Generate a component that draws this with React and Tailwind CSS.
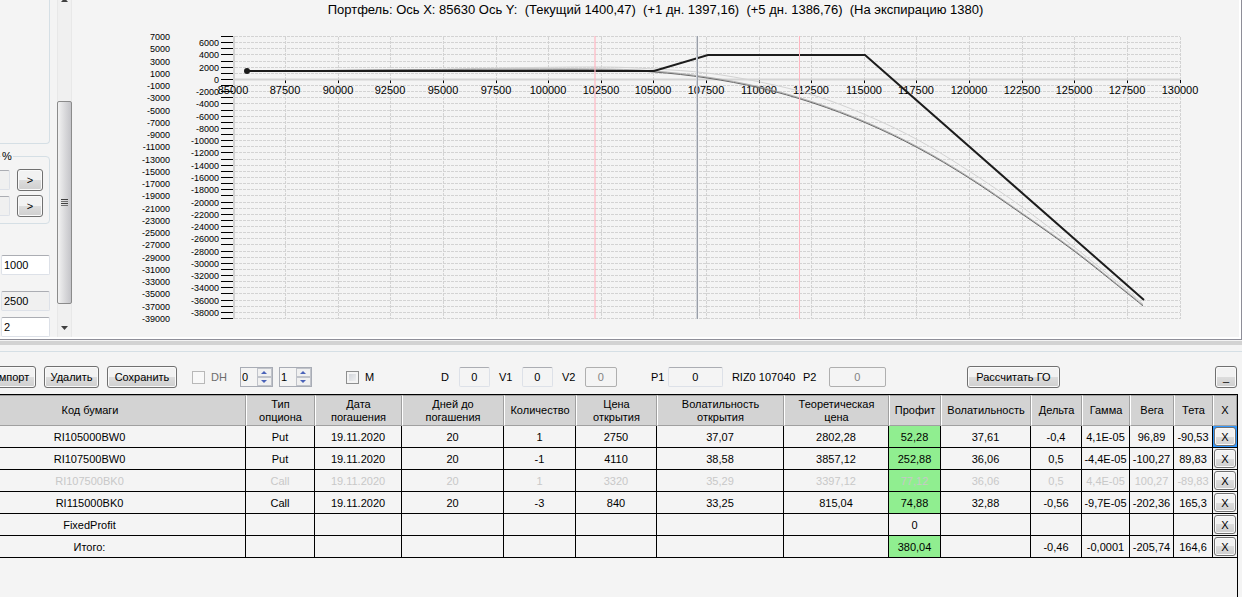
import React, { useState } from 'react';

const X_MIN = 85000;
const Y_MAX = 7000;
const PLOT = { left: 233, right: 1180, top: 37, bottom: 319 };

const toX = (v) => Math.floor(PLOT.left + ((v - X_MIN) * (PLOT.right - PLOT.left)) / 45000);
const toY = (v) => Math.round(PLOT.top + ((Y_MAX - v) * (PLOT.bottom - PLOT.top)) / 46000);

const xTicks = Array.from({ length: 19 }, (_, i) => X_MIN + i * 2500);
const yTicks = Array.from({ length: 47 }, (_, i) => Y_MAX - i * 1000);

const expiration = [[247, 71], [654, 71], [708, 55], [865, 55], [1144, 300]];
const current = [
    [247, 71], [400, 70], [500, 70], [600, 70], [654, 72], [707, 78], [760, 88], [813, 103],
    [866, 123], [918, 148], [969, 178], [1022, 214], [1074, 251], [1127, 293], [1143, 306],
];
const plusOne = [
    [247, 71], [400, 70], [500, 69], [600, 69], [654, 71], [707, 77], [760, 87], [813, 102],
    [866, 122], [918, 147], [969, 177], [1022, 213], [1074, 250], [1127, 292], [1143, 305],
];
const plusFive = [
    [247, 71], [400, 70], [500, 68], [600, 67], [654, 69], [707, 73], [760, 82], [813, 95],
    [866, 115], [918, 140], [969, 171], [1022, 207], [1074, 247], [1127, 290], [1143, 304],
];

// Catmull-Rom through the points, written out as cubic beziers
const smooth = (pts) => {
    let d = `M${pts[0][0]} ${pts[0][1]}`;
    for (let i = 0; i < pts.length - 1; i++) {
        const p0 = pts[i - 1] || pts[i];
        const p1 = pts[i];
        const p2 = pts[i + 1];
        const p3 = pts[i + 2] || p2;
        d += ` C${p1[0] + (p2[0] - p0[0]) / 6} ${p1[1] + (p2[1] - p0[1]) / 6} ${p2[0] - (p3[0] - p1[0]) / 6} ${p2[1] - (p3[1] - p1[1]) / 6} ${p2[0]} ${p2[1]}`;
    }
    return d;
};

const columns = [
    { label: 'Код бумаги' },
    { label: 'Тип опциона', width: 69 },
    { label: 'Дата погашения', width: 87 },
    { label: 'Дней до погашения', width: 102 },
    { label: 'Количество', width: 72 },
    { label: 'Цена открытия', width: 81 },
    { label: 'Волатильность открытия', width: 127 },
    { label: 'Теоретическая цена', width: 105 },
    { label: 'Профит', width: 52 },
    { label: 'Волатильность', width: 90 },
    { label: 'Дельта', width: 51 },
    { label: 'Гамма', width: 48 },
    { label: 'Вега', width: 44 },
    { label: 'Тета', width: 39 },
    { label: 'X', width: 24 },
];

const rows = [
    { cells: ['RI105000BW0', 'Put', '19.11.2020', '20', '1', '2750', '37,07', '2802,28', '52,28', '37,61', '-0,4', '4,1E-05', '96,89', '-90,53'], green: true, active: true },
    { cells: ['RI107500BW0', 'Put', '19.11.2020', '20', '-1', '4110', '38,58', '3857,12', '252,88', '36,06', '0,5', '-4,4E-05', '-100,27', '89,83'], green: true },
    { cells: ['RI107500BK0', 'Call', '19.11.2020', '20', '1', '3320', '35,29', '3397,12', '77,12', '36,06', '0,5', '4,4E-05', '100,27', '-89,83'], green: true, muted: true },
    { cells: ['RI115000BK0', 'Call', '19.11.2020', '20', '-3', '840', '33,25', '815,04', '74,88', '32,88', '-0,56', '-9,7E-05', '-202,36', '165,3'], green: true },
    { cells: ['FixedProfit', '', '', '', '', '', '', '', '0', '', '', '', '', ''] },
    { cells: ['Итого:', '', '', '', '', '', '', '', '380,04', '', '-0,46', '-0,0001', '-205,74', '164,6'], green: true },
];

const Button = ({ className = '', ...props }) => (
    <button
        type="button"
        className={`shrink-0 rounded-[3px] border border-[#707070] bg-linear-to-b from-[#f2f2f2] from-50% via-[#dddddd] via-50% to-[#cfcfcf] text-center whitespace-nowrap inset-shadow-[0_0_0_1px_#fafafa] ${className}`}
        {...props}
    />
);

const Field = ({ className = '', ...props }) => (
    <input
        type="text"
        className={`h-5 min-w-0 shrink-0 rounded-[2px] border ${className}`}
        {...props}
    />
);

const Spinner = ({ label, value, setValue, className = '' }) => (
    <div className={`flex h-5 w-[33px] shrink-0 border border-[#a8acb5] ${className}`}>
        <input
            type="text"
            aria-label={label}
            className="w-4 min-w-0 pl-px"
            value={value}
            onChange={e => setValue(Number(e.target.value) || 0)}
        />
        <div className="flex flex-1 flex-col">
            <button
                type="button"
                aria-label="Больше"
                onClick={() => setValue(value + 1)}
                className="flex flex-1 items-center justify-center border border-[#c0c3ca] bg-[#f0f0f0]"
            >
                <svg viewBox="0 0 6 3" className="h-[3px] w-[6px]"><path d="M0 3L3 0L6 3Z" fill="#4a62b8" /></svg>
            </button>
            <button
                type="button"
                aria-label="Меньше"
                onClick={() => setValue(value - 1)}
                className="flex flex-1 items-center justify-center border border-[#c0c3ca] bg-[#f0f0f0]"
            >
                <svg viewBox="0 0 6 3" className="h-[3px] w-[6px]"><path d="M0 0L3 3L6 0Z" fill="#4a62b8" /></svg>
            </button>
        </div>
    </div>
);

const Sidebar = () => (
    <div className="flex w-[72px] shrink-0 overflow-hidden">
        <div className="w-[57px] shrink-0 overflow-hidden">
            <div className="-ml-2 h-36 w-[58px] rounded-b-[4px] border border-t-0 border-[#d5dfe5]" />
            <fieldset className="mt-1 -ml-2 h-[76px] w-[58px] rounded-[4px] border border-[#d5dfe5] pt-[5px]">
                <legend className="ml-2 px-px leading-4">%</legend>
                <div className="flex flex-col gap-1">
                    <div className="flex h-[22px] items-center gap-[7px]">
                        <Field aria-label="Первый процент" className="w-[17px] border-[#dde1e8] border-t-[#abadb3] bg-[#f0f0f0]" readOnly />
                        <Button className="h-[22px] w-[26px]">&gt;</Button>
                    </div>
                    <div className="flex h-[22px] items-center gap-[7px]">
                        <Field aria-label="Второй процент" className="w-[17px] border-[#dde1e8] border-t-[#abadb3] bg-[#f0f0f0]" readOnly />
                        <Button className="h-[22px] w-[26px]">&gt;</Button>
                    </div>
                </div>
            </fieldset>
            <div className="ml-px flex w-[49px] flex-col pt-[31px]">
                <Field aria-label="Шаг" defaultValue="1000" className="border-[#dde1e8] border-t-[#abadb3] bg-white pl-0.5" />
                <Field aria-label="Шаг сетки" defaultValue="2500" readOnly className="mt-4 border-[#dde1e8] border-t-[#abadb3] bg-[#f0f0f0] pl-0.5" />
                <Field aria-label="Знаков" defaultValue="2" className="mt-1.5 border-[#dde1e8] border-t-[#abadb3] bg-white pl-0.5" />
            </div>
        </div>
        {/* Scrollbar */}
        <div className="flex w-[15px] flex-col items-center border-x border-[#e8e8e8] bg-[#f0f0f0]">
            <svg viewBox="0 0 7 4" className="-mt-0.5 h-1 w-[7px] shrink-0"><path d="M0 4L3.5 0L7 4Z" fill="#404040" /></svg>
            <div className="mt-[99px] flex h-[203px] w-[15px] shrink-0 flex-col items-center justify-center gap-px rounded-[2px] border border-[#8b8b8b] bg-linear-to-r from-[#f2f2f2] to-[#c4c4c8]">
                <div className="h-px w-[7px] bg-[#404040]" />
                <div className="h-px w-[7px] bg-[#707070]" />
                <div className="h-px w-[7px] bg-[#404040]" />
                <div className="h-px w-[7px] bg-[#707070]" />
            </div>
            <svg viewBox="0 0 7 4" className="mt-[22px] h-1 w-[7px] shrink-0"><path d="M0 0L3.5 4L7 0Z" fill="#404040" /></svg>
        </div>
    </div>
);

const Chart = () => (
    <svg viewBox="72 20 1167 317" className="block w-full" role="img" aria-label="Портфель">
        {yTicks.map(v => (
            <g key={v}>
                <path d={`M${PLOT.left + 2} ${toY(v) - 0.5}H${PLOT.right}`} stroke="#d3d3d3" strokeDasharray="3 1" />
                <path d={`M221 ${toY(v) - 0.5}H233`} stroke="#000" />
                <text x={v % 2000 ? 170 : 219} y={toY(v) + 3} textAnchor="end" fontSize="9">{v}</text>
            </g>
        ))}
        {xTicks.map(v => (
            <g key={v}>
                <path d={`M${toX(v) + 0.5} ${PLOT.top}V${PLOT.bottom}`} stroke="#d3d3d3" strokeDasharray="3 1" />
                <path d={`M${toX(v) + 0.5} 80V83`} stroke="#000" />
            </g>
        ))}
        <path d="M234 36V319M233 79.5H1180" stroke="#d3d3d3" strokeWidth="2" fill="none" />
        {xTicks.map(v => (
            <text key={v} x={toX(v)} y="94" textAnchor="middle" fontSize="11">{v}</text>
        ))}
        <path d={smooth(plusFive)} stroke="#d3d3d3" fill="none" />
        <path d={smooth(plusOne)} stroke="#b0b0b0" fill="none" />
        <path d={smooth(current)} stroke="#696969" fill="none" />
        <path d={`M${expiration.join('L')}`} stroke="#1c1c1c" strokeWidth="2" fill="none" />
        <circle cx="247" cy="71" r="3" fill="#1c1c1c" />
        <path d="M595 36V319" stroke="#ffb6c1" strokeOpacity="0.6" strokeWidth="2" />
        <path d="M799.5 36V319" stroke="#ffb6c1" />
        <path d="M696.5 36V319" stroke="#d0d3d8" />
        <path d="M697.5 36V319" stroke="#9a9fa9" />
    </svg>
);

const Toolbar = () => {
    const [first, setFirst] = useState(0);
    const [second, setSecond] = useState(1);

    return (
        <div className="flex h-[42px] items-center overflow-hidden pt-2 pr-[5px]">
            <Button className="-ml-4 h-[22px] w-[52px]">Импорт</Button>
            <Button className="ml-2 h-[22px] w-[55px]">Удалить</Button>
            <Button className="ml-2 h-[22px] w-[70px]">Сохранить</Button>
            <label className="ml-[15px] flex shrink-0 items-center gap-1.5 text-[#6d6d6d]">
                <input type="checkbox" disabled className="size-[13px] appearance-none border border-[#b8b8b8] bg-[#f8f8f8]" />
                DH
            </label>
            <Spinner label="Первое значение" value={first} setValue={setFirst} className="ml-[13px]" />
            <Spinner label="Второе значение" value={second} setValue={setSecond} className="ml-1.5" />
            <label className="ml-[34px] flex w-[95px] shrink-0 items-center gap-1.5">
                <input type="checkbox" className="size-[13px] appearance-none border border-[#8e8f8f] bg-linear-to-br from-[#cbcfd5] to-[#f6f6f6] inset-shadow-[0_0_0_2px_#f4f4f4]" />
                M
            </label>
            <label className="flex shrink-0 items-center">
                <span className="w-[18px]">D</span>
                <Field defaultValue="0" className="w-[31px] border-[#dde1e8] border-t-[#abadb3] text-center" />
            </label>
            <label className="ml-[9px] flex shrink-0 items-center">
                <span className="w-[23px]">V1</span>
                <Field defaultValue="0" className="w-[31px] border-[#dde1e8] border-t-[#abadb3] text-center" />
            </label>
            <label className="ml-[9px] flex shrink-0 items-center">
                <span className="w-[23px]">V2</span>
                <Field defaultValue="0" disabled className="w-8 border-[#afafaf] text-center text-[#838383]" />
            </label>
            <label className="ml-[34px] flex shrink-0 items-center">
                <span className="w-[17px]">P1</span>
                <Field defaultValue="0" className="w-[55px] border-[#dde1e8] border-t-[#abadb3] text-center" />
            </label>
            <span className="ml-[9px] w-[71px] shrink-0 whitespace-nowrap">RIZ0 107040</span>
            <label className="flex shrink-0 items-center">
                <span className="w-[26px]">P2</span>
                <Field defaultValue="0" disabled className="w-[57px] border-[#afafaf] text-center text-[#838383]" />
            </label>
            <Button className="ml-[81px] h-[22px] w-[93px]">Рассчитать ГО</Button>
            <Button className="ml-auto h-[22px] w-[22px]">_</Button>
        </div>
    );
};

const Positions = () => (
    <div className="mr-1 flex-1 overflow-hidden border-t border-r border-black">
        <div className="-ml-[66px]">
            <table className="w-full table-fixed border-separate border-spacing-0 text-center">
                <colgroup>
                    {columns.map((c, i) => <col key={i} style={{ width: c.width }} />)}
                </colgroup>
                <thead>
                    <tr className="h-[31px] bg-[#d3d3d3]">
                        {columns.map((c, i) => (
                            <th
                                key={i}
                                scope="col"
                                className="border border-t-[#a0a0a0] border-r-[#a0a0a0] border-b-[#a0a0a0] border-l-white p-0 leading-[13px] font-normal"
                            >
                                {/* two-word headings take two lines, the code column stays on one */}
                                {i === 0 ? c.label : c.label.replace(/ (?=\S+$)/, '\n').split('\n').map(line => (
                                    <span key={line} className="block whitespace-nowrap">{line}</span>
                                ))}
                            </th>
                        ))}
                    </tr>
                </thead>
                <tbody>
                    {rows.map(row => (
                        <tr key={row.cells[0]} className={row.muted ? 'h-[22px] text-[#c8c8c8]' : 'h-[22px]'}>
                            {row.cells.map((cell, i) => (
                                <td
                                    key={i}
                                    className={`border-r border-b border-black p-0 leading-4 whitespace-nowrap ${i === 8 && row.green ? 'bg-[#90ee90]' : ''}`}
                                >
                                    {cell}
                                </td>
                            ))}
                            <td className={`border-b border-black p-0 text-black ${row.active ? 'bg-[#3399ff]' : ''}`}>
                                <Button aria-label={`Удалить ${row.cells[0]}`} className="mx-auto block h-[19px] w-[22px] leading-4">X</Button>
                            </td>
                        </tr>
                    ))}
                </tbody>
            </table>
        </div>
    </div>
);

export default function App() {
    return (
        <div className="flex min-h-screen flex-col bg-[#f4f4f4] font-['Liberation_Sans',Arial,sans-serif] text-[11px] leading-4 text-black">
            <div className="border-r border-b border-[#8e8e98]">
                <div className="flex border-r-2 border-b-2 border-white">
                    <Sidebar />
                    <div className="min-w-0 flex-1">
                        <h1 className="h-5 text-center text-[13px] leading-5 whitespace-pre">
                            {'Портфель: Ось X: 85630 Ось Y:  (Текущий 1400,47)  (+1 дн. 1397,16)  (+5 дн. 1386,76)  (На экспирацию 1380)'}
                        </h1>
                        <Chart />
                    </div>
                </div>
            </div>
            <div className="mt-px h-1 bg-[#d3d3d3]" />
            <div className="mt-[6px] h-px bg-[#d5dfe5]" />
            <Toolbar />
            <Positions />
        </div>
    );
}
